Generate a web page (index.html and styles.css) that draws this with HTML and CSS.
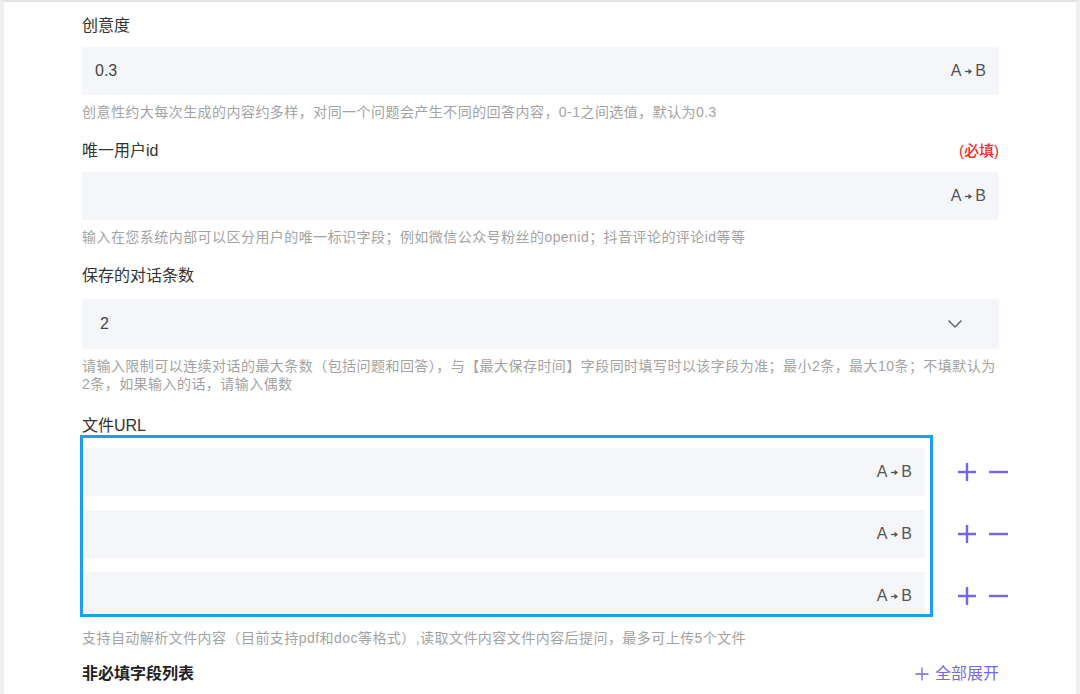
FILE: index.html
```html
<!DOCTYPE html>
<html>
<head>
  <meta charset="UTF-8">
  <title>参数配置</title>
  <link rel="stylesheet" href="styles.css">
</head>
<body>
  <div class="page">
    <div class="field">
      <div class="label">创意度</div>
      <div class="input">
        <span class="value">0.3</span>
        <span class="trans">A<svg viewBox="0 0 10 10"><path d="M1 5h4.5"/><polygon points="5,2 9,5 5,8"/></svg>B</span>
      </div>
      <div class="help">创意性约大每次生成的内容约多样，对同一个问题会产生不同的回答内容，0-1之间选值，默认为0.3</div>
    </div>

    <div class="field">
      <div class="label row">
        <span>唯一用户id</span>
        <span class="required">(必填)</span>
      </div>
      <div class="input">
        <span class="value"></span>
        <span class="trans">A<svg viewBox="0 0 10 10"><path d="M1 5h4.5"/><polygon points="5,2 9,5 5,8"/></svg>B</span>
      </div>
      <div class="help">输入在您系统内部可以区分用户的唯一标识字段；例如微信公众号粉丝的openid；抖音评论的评论id等等</div>
    </div>

    <div class="field">
      <div class="label">保存的对话条数</div>
      <div class="input select">
        <span class="value">2</span>
        <svg class="chevron" viewBox="0 0 16 10"><polyline points="1.5,1.5 8,8 14.5,1.5"/></svg>
      </div>
      <div class="help">请输入限制可以连续对话的最大条数（包括问题和回答），与【最大保存时间】字段同时填写时以该字段为准；最小2条，最大10条；不填默认为2条，如果输入的话，请输入偶数</div>
    </div>

    <div class="field url-field">
      <div class="label">文件URL</div>
      <div class="url-row">
        <div class="url-box">
          <div class="input">
            <span class="value"></span>
            <span class="trans">A<svg viewBox="0 0 10 10"><path d="M1 5h4.5"/><polygon points="5,2 9,5 5,8"/></svg>B</span>
          </div>
          <div class="input">
            <span class="value"></span>
            <span class="trans">A<svg viewBox="0 0 10 10"><path d="M1 5h4.5"/><polygon points="5,2 9,5 5,8"/></svg>B</span>
          </div>
          <div class="input">
            <span class="value"></span>
            <span class="trans">A<svg viewBox="0 0 10 10"><path d="M1 5h4.5"/><polygon points="5,2 9,5 5,8"/></svg>B</span>
          </div>
        </div>
        <div class="url-actions">
          <div class="actions">
            <svg viewBox="0 0 20 20"><path d="M10 1v18M1 10h18"/></svg>
            <svg viewBox="0 0 20 20"><path d="M1 10h19"/></svg>
          </div>
          <div class="actions">
            <svg viewBox="0 0 20 20"><path d="M10 1v18M1 10h18"/></svg>
            <svg viewBox="0 0 20 20"><path d="M1 10h19"/></svg>
          </div>
          <div class="actions">
            <svg viewBox="0 0 20 20"><path d="M10 1v18M1 10h18"/></svg>
            <svg viewBox="0 0 20 20"><path d="M1 10h19"/></svg>
          </div>
        </div>
      </div>
      <div class="help">支持自动解析文件内容（目前支持pdf和doc等格式）,读取文件内容文件内容后提问，最多可上传5个文件</div>
    </div>

    <div class="section-head">
      <span class="section-title">非必填字段列表</span>
      <span class="expand-all">
        <svg viewBox="0 0 14 14"><path d="M7 0.5v13M0.5 7h13"/></svg>
        全部展开
      </span>
    </div>
  </div>
</body>
</html>
```

FILE: styles.css
```css
body {
  margin: 0;
  font-family: "Liberation Sans", "Noto Sans CJK SC", sans-serif;
  color: #333;
  background: #fff;
}

.page {
  box-sizing: border-box;
  height: 694px;
  overflow: hidden;
  border-top: 2px solid #e4e4e4;
  border-left: 4px solid #efefef;
  border-right: 4px solid #efefef;
  padding: 13px 77px 0 78px;
}

.field {
  margin-bottom: 19px;
}

.label {
  font-size: 16px;
  line-height: 22px;
  margin-bottom: 10px;
  color: #333;
}

.label.row {
  display: flex;
  justify-content: space-between;
}

.required {
  color: #ee2b2b;
  font-size: 15px;
  font-weight: 500;
}

.input {
  display: flex;
  align-items: center;
  justify-content: space-between;
  height: 48px;
  padding: 0 13px;
  background-color: #f5f6fa;
  border-radius: 2px;
  font-size: 16px;
  color: #444;
}

.input.select {
  height: 50px;
  padding: 0 36px 0 18px;
}

.field:nth-child(3) .label {
  margin-bottom: 12px;
}

.trans {
  display: flex;
  align-items: center;
  color: #555;
  font-size: 16px;
}

.trans svg {
  width: 9px;
  height: 9px;
  margin: 0 2px 0 3px;
}

.trans svg path {
  stroke: #555;
  stroke-width: 1.4;
}

.trans svg polygon {
  fill: #555;
}

.chevron {
  width: 16px;
  height: 10px;
}

.chevron polyline {
  fill: none;
  stroke: #666;
  stroke-width: 1.5;
}

.help {
  margin-top: 8px;
  font-size: 14px;
  line-height: 18px;
  letter-spacing: 0.45px;
  color: #a3a3a3;
}

.url-field {
  margin-top: 2px;
}

.url-field .label {
  margin-bottom: 0;
  padding-top: 6px;
  line-height: 16px;
}

.url-row {
  display: flex;
  align-items: flex-start;
  gap: 24px;
  margin-top: 1px;
  margin-left: -2px;
}

.url-box {
  box-sizing: border-box;
  flex-shrink: 0;
  width: 853px;
  height: 182px;
  overflow: hidden;
  border: 3px solid #1a9ff2;
  padding: 10px 5px 0 1px;
  display: flex;
  flex-direction: column;
  gap: 14px;
}

.url-box .input {
  flex-shrink: 0;
}

.url-actions {
  flex-shrink: 0;
  padding-top: 13px;
  display: flex;
  flex-direction: column;
  gap: 14px;
}

.actions {
  height: 48px;
  display: flex;
  align-items: center;
  gap: 11px;
}

.actions svg {
  width: 20px;
  height: 20px;
}

.actions svg path {
  stroke: #7467ee;
  stroke-width: 2.4;
  fill: none;
}

.url-field .help {
  margin-top: 9px;
}

.section-head {
  display: flex;
  justify-content: space-between;
  align-items: center;
  margin-top: -3px;
  line-height: 22px;
}

.section-title {
  font-size: 16px;
  font-weight: bold;
  color: #222;
}

.expand-all {
  display: flex;
  align-items: center;
  gap: 6px;
  font-size: 16px;
  color: #7467ee;
}

.expand-all svg {
  width: 14px;
  height: 14px;
}

.expand-all svg path {
  stroke: #7467ee;
  stroke-width: 1.3;
  fill: none;
}
```
